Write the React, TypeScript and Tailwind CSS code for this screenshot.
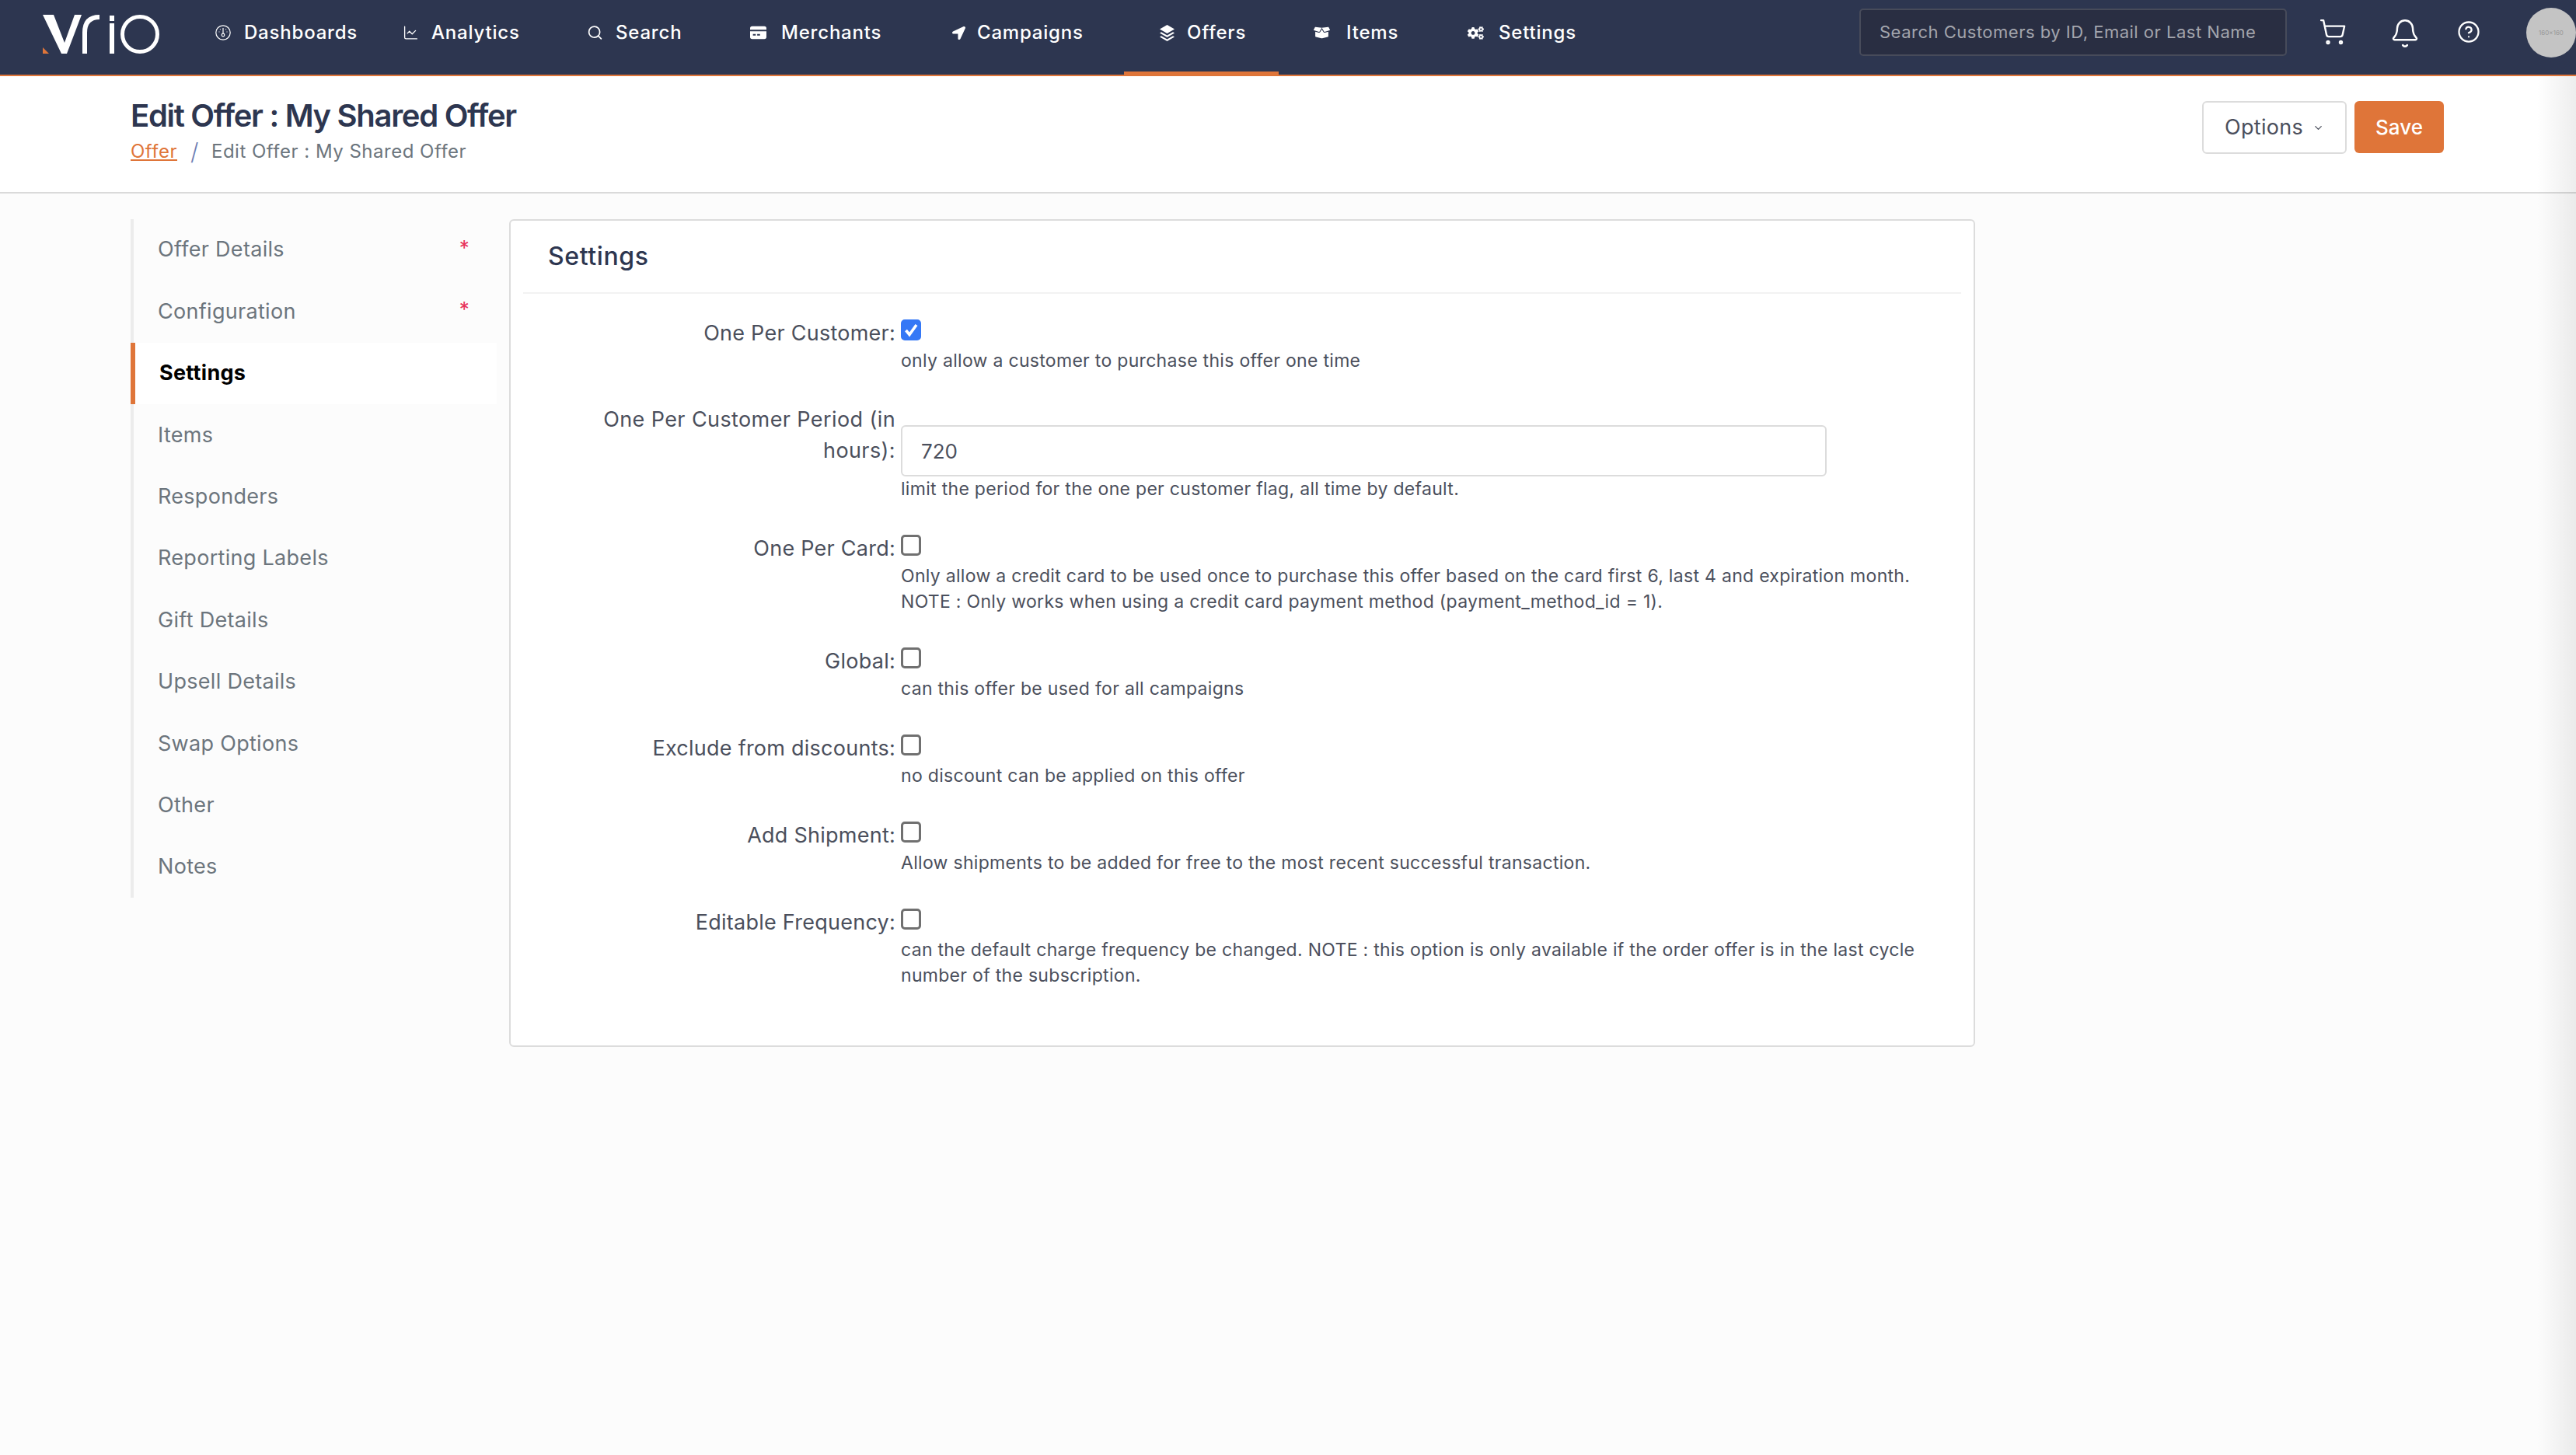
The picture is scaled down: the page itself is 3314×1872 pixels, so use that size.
import { Search, ChevronDown, Bell, CircleHelp, ShoppingCart, ChartLine } from 'lucide-react';
import { FaBoxOpen, FaCogs, FaLocationArrow } from 'react-icons/fa';
import type { ReactNode } from 'react';

const VrioLogo = () => (
  <svg width="180" height="70" viewBox="0 0 180 70" className="shrink-0">
    <path d="M15 9 H29 L43 45 L56 9 H65 L46 59 H39 Z" fill="#fff" />
    <path d="M69 59 V32 Q69 12 88 12" fill="none" stroke="#fff" strokeWidth="6" />
    <rect x="101" y="10" width="6" height="7" fill="#fff" />
    <rect x="101" y="20" width="6" height="39" fill="#fff" />
    <circle cx="140" cy="34" r="22.5" fill="none" stroke="#fff" strokeWidth="5" />
    <path d="M15 51 L23 59 H15 Z" fill="#df7539" />
  </svg>
);

const GaugeIcon = () => (
  <svg width="20" height="20" viewBox="0 0 20 20" fill="none" stroke="#fff" strokeWidth="1.2">
    <circle cx="10" cy="10" r="9.2" />
    <path d="M10 4 V11" />
    <circle cx="10" cy="13" r="1.8" />
    <path d="M4.5 9 H5.5 M14.5 9 H15.5 M6 5.5 L6.6 6.2 M14 5.5 L13.4 6.2" />
  </svg>
);

const CardIcon = () => (
  <svg width="23" height="18" viewBox="0 0 23 18" fill="#fff">
    <path d="M3 0 H20 Q23 0 23 3 V5 H0 V3 Q0 0 3 0 Z" />
    <path fillRule="evenodd" d="M0 7 H23 V15 Q23 18 20 18 H3 Q0 18 0 15 Z M4 11 V13 H8 V11 Z M10 11 V13 H14 V11 Z" />
  </svg>
);

const LayersIcon = () => (
  <svg width="21" height="21" viewBox="0 0 21 21" fill="#fff">
    <path d="M10.5 0 L20 5.5 L10.5 11 L1 5.5 Z" />
    <path d="M3 9.3 L10.5 13.6 L18 9.3 L20 10.6 L10.5 16 L1 10.6 Z" />
    <path d="M3 14.3 L10.5 18.6 L18 14.3 L20 15.6 L10.5 21 L1 15.6 Z" />
  </svg>
);

type NavItem = { label: string; icon: ReactNode; width: string; gap: string; active?: boolean };

const navItems: NavItem[] = [
  { label: 'Dashboards', icon: <GaugeIcon />, width: 'w-[242px]', gap: 'gap-[17px]' },
  { label: 'Analytics', icon: <ChartLine size={22} strokeWidth={1.5} color="#fff" />, width: 'w-[237px]', gap: 'gap-[16px]' },
  { label: 'Search', icon: <Search size={22} strokeWidth={2} color="#fff" />, width: 'w-[210px]', gap: 'gap-[16px]' },
  { label: 'Merchants', icon: <CardIcon />, width: 'w-[258px]', gap: 'gap-[19px]' },
  { label: 'Campaigns', icon: <FaLocationArrow size={17} color="#fff" />, width: 'w-[268px]', gap: 'gap-[13px]' },
  { label: 'Offers', icon: <LayersIcon />, width: 'w-[199px]', gap: 'gap-[15px]', active: true },
  { label: 'Items', icon: <FaBoxOpen size={24} color="#fff" />, width: 'w-[198px]', gap: 'gap-[21px]' },
  { label: 'Settings', icon: <FaCogs size={25} color="#fff" />, width: 'w-[228px]', gap: 'gap-[19px]' },
];

const TopNav = () => (
  <div className="relative flex h-[98px] overflow-hidden border-b-2 border-[#df7539] bg-[#2d3650] text-white">
    <div className="ml-[40px] mt-[10px] w-[191px]">
      <VrioLogo />
    </div>
    <div className="flex">
      {navItems.map((item) => (
        <div
          key={item.label}
          className={`flex h-[96px] ${item.width} ${item.active ? 'border-b-4 border-[#df7539]' : ''} pl-[45px]`}
        >
          <div className={`flex h-[84px] items-center ${item.gap}`}>
            <span className="flex w-[21px] shrink-0 justify-center">{item.icon}</span>
            <span className="whitespace-nowrap text-[24px] font-medium tracking-[0.8px]">{item.label}</span>
          </div>
        </div>
      ))}
    </div>
    <div className="ml-auto flex items-center">
      <input
        readOnly
        placeholder="Search Customers by ID, Email or Last Name"
        className="mb-[14px] h-[61px] w-[550px] rounded-[5px] border-2 border-[#474b5a] bg-[#292e42] px-[24px] text-[22px] tracking-[0.5px] text-white outline-none placeholder:text-[#a3a5ad]"
      />
      <ShoppingCart size={36} strokeWidth={1.6} color="#fff" className="mb-[14px] ml-[41px]" />
      <Bell size={40} strokeWidth={1.5} color="#fff" className="mb-[10px] ml-[55px]" />
      <CircleHelp size={30} strokeWidth={1.8} color="#fff" className="mb-[14px] ml-[47px]" />
      <div className="mb-[12px] ml-[59px] flex h-[64px] w-[64px] items-center justify-center rounded-full bg-[#c4c4c4] text-[8px] text-[#999]">
        160×160
      </div>
    </div>
  </div>
);

const PageHeader = () => (
  <div className="flex h-[151px] items-start justify-between border-b-2 border-[#dadada] bg-white pl-[168px] pr-[170px]">
    <div className="pt-[28px]">
      <h1 className="text-[40px] font-semibold leading-[46px] tracking-[-1.3px] text-[#2d3650]">Edit Offer : My Shared Offer</h1>
      <div className="mt-[7px] flex items-center text-[24px] leading-[32px] tracking-[0.5px]">
        <a className="text-[#df7539] underline underline-offset-2">Offer</a>
        <span className="ml-[17px] mr-[16px] text-[30px] font-light leading-none text-[#6f7fb5]">/</span>
        <span className="text-[#6c757d]">Edit Offer : My Shared Offer</span>
      </div>
    </div>
    <div className="flex gap-[10px] pt-[32px]">
      <button className="flex h-[68px] w-[186px] items-center justify-center gap-[12px] rounded-[6px] border-2 border-[#dcdcdc] bg-white text-[27px] tracking-[0.3px] text-[#4b4f5c]">
        Options
        <ChevronDown size={15} strokeWidth={2} />
      </button>
      <button className="h-[67px] w-[115px] rounded-[6px] bg-[#df7539] text-[26px] font-medium text-white">Save</button>
    </div>
  </div>
);

const sideItems = [
  { label: 'Offer Details', required: true },
  { label: 'Configuration', required: true },
  { label: 'Settings', active: true },
  { label: 'Items' },
  { label: 'Responders' },
  { label: 'Reporting Labels' },
  { label: 'Gift Details' },
  { label: 'Upsell Details' },
  { label: 'Swap Options' },
  { label: 'Other' },
  { label: 'Notes' },
];

const SideNav = () => (
  <div className="w-[471px] shrink-0">
    {sideItems.map((item) => (
      <div
        key={item.label}
        className={`relative flex h-[79.4px] items-center justify-between pr-[35px] text-[27px] tracking-[0.3px] ${
          item.active
            ? 'border-l-[6px] border-[#df7539] bg-white pl-[31px] font-bold text-black'
            : 'border-l-4 border-[#ececec] pl-[31px] text-[#6c757d]'
        }`}
      >
        <span>{item.label}</span>
        {item.required && <span className="mb-[6px] text-[26px] leading-none text-[#e8335a]">*</span>}
      </div>
    ))}
  </div>
);

type Row = { label: string[]; hint: string[]; checked?: boolean; value?: string };

const rows: Row[] = [
  { label: ['One Per Customer:'], hint: ['only allow a customer to purchase this offer one time'], checked: true },
  {
    label: ['One Per Customer Period (in', 'hours):'],
    hint: ['limit the period for the one per customer flag, all time by default.'],
    value: '720',
  },
  {
    label: ['One Per Card:'],
    hint: [
      'Only allow a credit card to be used once to purchase this offer based on the card first 6, last 4 and expiration month.',
      'NOTE : Only works when using a credit card payment method (payment_method_id = 1).',
    ],
  },
  { label: ['Global:'], hint: ['can this offer be used for all campaigns'] },
  { label: ['Exclude from discounts:'], hint: ['no discount can be applied on this offer'] },
  { label: ['Add Shipment:'], hint: ['Allow shipments to be added for free to the most recent successful transaction.'] },
  {
    label: ['Editable Frequency:'],
    hint: [
      'can the default charge frequency be changed. NOTE : this option is only available if the order offer is in the last cycle',
      'number of the subscription.',
    ],
  },
];

const CheckBox = ({ checked }: { checked?: boolean }) => (
  <div className="relative -mt-[1px] mb-[10px] h-[27px] w-[26px]">
    <input
      type="checkbox"
      readOnly
      checked={!!checked}
      className="block h-[27px] w-[26px] appearance-none rounded-[5px] border-[3px] border-[#707070] bg-white checked:border-[#3578f6] checked:bg-[#3578f6]"
    />
    {checked && (
      <svg viewBox="0 0 26 26" className="absolute inset-0 h-[27px] w-[26px]" fill="none" stroke="#fff" strokeWidth="3.6">
        <path d="M6.5 13.5 L11 19 L20 6.5" />
      </svg>
    )}
  </div>
);

const SettingsRow = ({ row }: { row: Row }) => (
  <div className="mb-[43px] flex">
    <div className={`w-[486px] shrink-0 whitespace-nowrap pr-[7px] text-right text-[27px] text-[#4b4f5c] ${row.value ? '-mt-[4px] leading-[40px] tracking-[0.4px]' : 'leading-[34px] tracking-[0.25px]'}`}>
      {row.label.map((line) => (
        <div key={line}>{line}</div>
      ))}
    </div>
    <div className="min-w-0 flex-1">
      {row.value ? (
        <input
          readOnly
          value={row.value}
          className="mt-[23px] block h-[66px] w-[1191px] rounded-[6px] border-2 border-[#dcdcdc] bg-white px-[24px] text-[26px] text-[#4b4f5c] outline-none"
        />
      ) : (
        <CheckBox checked={row.checked} />
      )}
      <div className="whitespace-nowrap text-[23px] leading-[33px] tracking-[0.3px] text-[#4b4f5c]">
        {row.hint.map((line) => (
          <div key={line}>{line}</div>
        ))}
      </div>
    </div>
  </div>
);

export default function App() {
  return (
    <div className="relative min-h-[1872px] overflow-hidden bg-[#fcfcfc] font-['Inter',sans-serif]">
      <TopNav />
      <PageHeader />
      <div className="flex gap-[16px] pl-[168px] pt-[33px]">
        <SideNav />
        <div className="h-[1065px] w-[1886px] rounded-[6px] border-2 border-[#dcdcdc] bg-white">
          <div className="mx-[16px] h-[94px] border-b-2 border-[#f2f2f2] pl-[32px] pt-[28px] text-[32px] font-medium leading-[36px] tracking-[0.6px] text-[#2d3650]">
            Settings
          </div>
          <div className="pl-[16px] pt-[34px]">
            {rows.map((row) => (
              <SettingsRow key={row.label[0]} row={row} />
            ))}
          </div>
        </div>
      </div>
      <div className="pointer-events-none absolute bottom-0 right-0 top-[98px] w-[50px] bg-gradient-to-l from-black/7 to-transparent" />
    </div>
  );
}
